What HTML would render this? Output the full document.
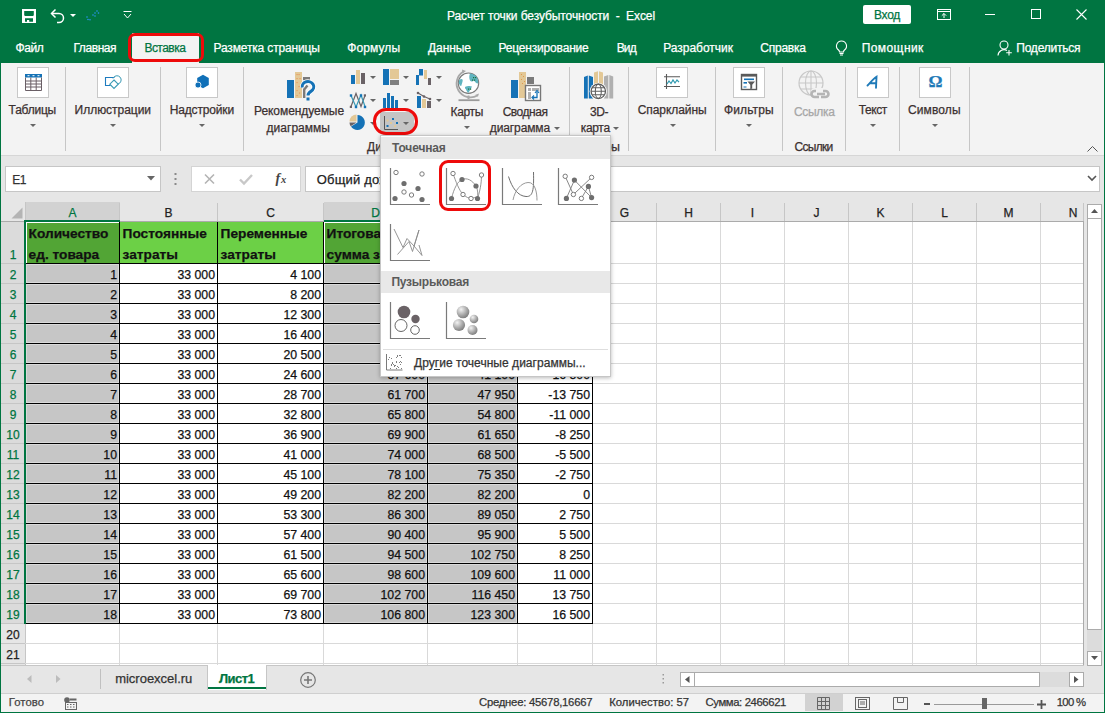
<!DOCTYPE html>
<html><head><meta charset="utf-8"><style>
html,body{margin:0;padding:0;width:1105px;height:713px;overflow:hidden;background:#007541;}
body{position:relative;font-family:"Liberation Sans",sans-serif;}
.t{position:absolute;white-space:pre;line-height:1;-webkit-text-stroke:0.25px currentColor;}
.r{position:absolute;}
svg.r{overflow:visible}
</style></head><body>
<div class="r" style="left:0px;top:0px;width:1105px;height:713px;background:#007541"></div>
<div class="r" style="left:1px;top:63px;width:1103px;height:92px;background:#f3f3f3"></div>
<div class="r" style="left:1px;top:155px;width:1103px;height:1px;background:#d6d6d6"></div>
<div class="r" style="left:1px;top:156px;width:1103px;height:509px;background:#e6e6e6"></div>
<div class="t" style="left:447.00px;top:9.84px;font-size:12px;color:#fff;letter-spacing:-0.085px;">Расчет точки безубыточности  -  Excel</div>
<div class="r" style="left:863px;top:5px;width:48px;height:19px;background:#fff;border-radius:2px"></div>
<div class="t" style="left:874.00px;top:8.84px;font-size:12px;color:#007541;letter-spacing:-0.286px;">Вход</div>
<svg class="r" style="left:937px;top:9px;" width="14" height="11" viewBox="0 0 14 11"><rect x="0.5" y="0.5" width="13" height="10" fill="none" stroke="#fff"/><path d="M0.5 2.5h13" stroke="#fff"/><path d="M7 9V4.5M4.8 6.7L7 4.5l2.2 2.2" fill="none" stroke="#fff"/></svg>
<div class="r" style="left:985px;top:14px;width:10px;height:1px;background:#fff"></div>
<div class="r" style="left:1031px;top:9px;width:10px;height:10px;border:1px solid #fff;box-sizing:border-box"></div>
<svg class="r" style="left:1076px;top:9px;" width="11" height="11" viewBox="0 0 11 11"><path d="M0.5 0.5L10.5 10.5M10.5 0.5L0.5 10.5" stroke="#fff" stroke-width="1.1"/></svg>
<svg class="r" style="left:22px;top:9px;" width="14" height="14" viewBox="0 0 14 14"><rect x="0" y="0" width="14" height="14" fill="#fff"/><path d="M2.2 2h9.6v4.2l-0.8 0.8H3l-0.8-0.8z" fill="#007541"/><path d="M3 9.2h8v3.6H7.2v-1.8H5v1.8H3z" fill="#007541"/></svg>
<svg class="r" style="left:50px;top:8px;" width="16" height="15" viewBox="0 0 16 15"><path d="M2 5.5h7a4.5 4.5 0 0 1 0 9H7" fill="none" stroke="#fff" stroke-width="1.5"/><path d="M5.5 1.5L1.5 5.5l4 4" fill="none" stroke="#fff" stroke-width="1.5"/></svg>
<svg class="r" style="left:70px;top:14px;" width="6" height="3" viewBox="0 0 6 3"><path d="M0 0h6L3 3z" fill="#fff"/></svg>
<svg class="r" style="left:86px;top:10px;" width="15" height="11" viewBox="0 0 15 11"><g fill="#2b95f0"><circle cx="1" cy="7" r=".8"/><circle cx="2" cy="9.5" r=".8"/><circle cx="4" cy="9.8" r=".8"/><circle cx="7" cy="5" r=".8"/><circle cx="9" cy="6" r=".8"/><circle cx="9" cy="3" r=".8"/><circle cx="11" cy="1" r=".8"/><circle cx="12.5" cy="3" r=".8"/></g></svg>
<svg class="r" style="left:123px;top:11px;" width="9" height="8" viewBox="0 0 9 8"><path d="M0.5 0.5h8" stroke="#fff"/><path d="M1 3l3.5 4L8 3" fill="none" stroke="#fff"/></svg>
<div class="t" style="left:15.40px;top:41.84px;font-size:12px;color:#fff;letter-spacing:-0.350px;">Файл</div>
<div class="t" style="left:73.40px;top:41.84px;font-size:12px;color:#fff;letter-spacing:-0.410px;">Главная</div>
<div class="t" style="left:213.50px;top:41.84px;font-size:12px;color:#fff;letter-spacing:-0.151px;">Разметка страницы</div>
<div class="t" style="left:347.20px;top:41.84px;font-size:12px;color:#fff;letter-spacing:0.112px;">Формулы</div>
<div class="t" style="left:428.00px;top:41.84px;font-size:12px;color:#fff;letter-spacing:-0.075px;">Данные</div>
<div class="t" style="left:498.50px;top:41.84px;font-size:12px;color:#fff;letter-spacing:-0.182px;">Рецензирование</div>
<div class="t" style="left:616.70px;top:41.84px;font-size:12px;color:#fff;letter-spacing:-0.836px;">Вид</div>
<div class="t" style="left:663.20px;top:41.84px;font-size:12px;color:#fff;letter-spacing:-0.016px;">Разработчик</div>
<div class="t" style="left:760.30px;top:41.84px;font-size:12px;color:#fff;letter-spacing:-0.253px;">Справка</div>
<div class="r" style="left:132px;top:33px;width:67px;height:30px;background:#f3f3f3"></div>
<div class="t" style="left:144.40px;top:41.84px;font-size:12px;color:#007541;letter-spacing:-0.514px;">Вставка</div>
<div class="r" style="left:128px;top:33px;width:76px;height:29px;border:3px solid #ee0a0a;border-radius:7px;box-sizing:border-box"></div>
<div class="t" style="left:861.70px;top:41.84px;font-size:12px;color:#fff;letter-spacing:0.428px;">Помощник</div>
<svg class="r" style="left:835px;top:40px;" width="13" height="16" viewBox="0 0 13 16"><path d="M6.5 1a5 5 0 0 0-3 9c.6.5 1 1.2 1 2h4c0-.8.4-1.5 1-2a5 5 0 0 0-3-9z" fill="none" stroke="#fff" stroke-width="1.1"/><path d="M4.5 13.5h4M5 15h3" stroke="#fff" stroke-width="1"/></svg>
<svg class="r" style="left:997px;top:40px;" width="16" height="16" viewBox="0 0 16 16"><circle cx="7" cy="5" r="4" fill="none" stroke="#fff" stroke-width="1.1"/><path d="M1 15.5a6 6 0 0 1 9-5" fill="none" stroke="#fff" stroke-width="1.1"/><path d="M12 10v5.5M9.2 12.8h5.6" stroke="#fff" stroke-width="1.1"/></svg>
<div class="t" style="left:1016.30px;top:41.84px;font-size:12px;color:#fff;letter-spacing:-0.236px;">Поделиться</div>
<div class="r" style="left:65px;top:67px;width:1px;height:84px;background:#c6c6c6"></div>
<div class="r" style="left:160px;top:67px;width:1px;height:84px;background:#c6c6c6"></div>
<div class="r" style="left:243px;top:67px;width:1px;height:84px;background:#c6c6c6"></div>
<div class="r" style="left:569px;top:67px;width:1px;height:84px;background:#c6c6c6"></div>
<div class="r" style="left:628px;top:67px;width:1px;height:84px;background:#c6c6c6"></div>
<div class="r" style="left:715px;top:67px;width:1px;height:84px;background:#c6c6c6"></div>
<div class="r" style="left:782px;top:67px;width:1px;height:84px;background:#c6c6c6"></div>
<div class="r" style="left:845px;top:67px;width:1px;height:84px;background:#c6c6c6"></div>
<div class="r" style="left:899px;top:67px;width:1px;height:84px;background:#c6c6c6"></div>
<div class="r" style="left:969px;top:67px;width:1px;height:84px;background:#c6c6c6"></div>
<div class="r" style="left:17px;top:67px;width:32px;height:31px;background:#fff;border:1px solid #c8c8c8;box-sizing:border-box"></div>
<svg class="r" style="left:25px;top:74px;" width="17" height="17" viewBox="0 0 17 17"><rect x="0" y="0" width="17" height="3.5" fill="#1572b6"/><g fill="#fff"><rect x="2.5" y="1.2" width="2" height="1"/><rect x="7.5" y="1.2" width="2" height="1"/><rect x="12.5" y="1.2" width="2" height="1"/></g><path d="M0.5 3.5v13h16v-13M0.5 7h16M0.5 10h16M0.5 13h16M5.8 3.5v13M11.2 3.5v13" fill="none" stroke="#6a5f66" stroke-width="1"/></svg>
<div class="t" style="left:8.60px;top:103.84px;font-size:12px;color:#3b3030;letter-spacing:-0.229px;">Таблицы</div>
<svg class="r" style="left:29.6px;top:123.8px;" width="6" height="4" viewBox="0 0 6 4"><path d="M0 0h6L3 3z" fill="#666"/></svg>
<div class="r" style="left:97px;top:67px;width:32px;height:31px;background:#fff;border:1px solid #c8c8c8;box-sizing:border-box"></div>
<svg class="r" style="left:104px;top:74px;" width="18" height="18" viewBox="0 0 18 18"><path d="M6.5 11.5H1.5V3.5h9" fill="none" stroke="#1e7bbf" stroke-width="1.1"/><path d="M9 4.5a4.2 4.2 0 1 1 5 5.5" fill="none" stroke="#3a9ab5" stroke-width="1"/><path d="M10 6l4.2 4.2L10 14.4 5.8 10.2z" fill="none" stroke="#3a9ab5" stroke-width="1.1"/></svg>
<div class="t" style="left:74.60px;top:103.84px;font-size:12px;color:#3b3030;letter-spacing:-0.032px;">Иллюстрации</div>
<svg class="r" style="left:110px;top:123.8px;" width="6" height="4" viewBox="0 0 6 4"><path d="M0 0h6L3 3z" fill="#666"/></svg>
<div class="r" style="left:186px;top:67px;width:32px;height:31px;background:#fff;border:1px solid #c8c8c8;box-sizing:border-box"></div>
<svg class="r" style="left:194px;top:74px;" width="16" height="16" viewBox="0 0 16 16"><path d="M9 0.8l5.8 3.3v6.8L9 14.2 3.2 10.9V4.1z" fill="#1070b8"/><circle cx="4" cy="11" r="3" fill="#1070b8" stroke="#fff" stroke-width="0.8"/></svg>
<div class="t" style="left:169.70px;top:103.84px;font-size:12px;color:#3b3030;letter-spacing:-0.154px;">Надстройки</div>
<svg class="r" style="left:199px;top:123.8px;" width="6" height="4" viewBox="0 0 6 4"><path d="M0 0h6L3 3z" fill="#666"/></svg>
<svg class="r" style="left:286px;top:71px;" width="30" height="31" viewBox="0 0 30 31"><rect x="1" y="9" width="7" height="18" fill="#1572b6"/><rect x="9" y="1" width="7" height="26" fill="#e3c896"/><g fill="#e8955a"><rect x="10.5" y="3" width="1.1" height="1.1"/><rect x="12.5" y="3" width="1.1" height="1.1"/><rect x="10.5" y="7" width="1.1" height="1.1"/><rect x="13.5" y="7" width="1.1" height="1.1"/><rect x="10.5" y="11" width="1.1" height="1.1"/><rect x="12.5" y="15" width="1.1" height="1.1"/><rect x="10.5" y="19" width="1.1" height="1.1"/><rect x="13" y="21.5" width="1.1" height="1.1"/><rect x="10.5" y="24" width="1.1" height="1.1"/></g><rect x="17" y="6" width="7" height="3.2" fill="#7a7a7a"/><path d="M21.5 14.5L18.2 18.5V27" fill="none" stroke="#7a7a7a" stroke-width="2.4"/><path d="M16.2 16.5a5.8 5.2 0 1 1 9 3.6c-1.6 1-3.2 2-3.2 4.4" fill="none" stroke="#fff" stroke-width="4.6"/><path d="M16.2 16.5a5.8 5.2 0 1 1 9 3.6c-1.6 1-3.2 2-3.2 4.4" fill="none" stroke="#1572b6" stroke-width="3"/><rect x="20.5" y="26.5" width="3" height="3" fill="#1572b6"/></svg>
<div class="t" style="left:254.00px;top:105.34px;font-size:12px;color:#3b3030;letter-spacing:-0.065px;">Рекомендуемые</div>
<div class="t" style="left:266.60px;top:121.54px;font-size:12px;color:#3b3030;letter-spacing:0.019px;">диаграммы</div>
<svg class="r" style="left:350px;top:69px;" width="16" height="16" viewBox="0 0 16 16"><rect x="1" y="6" width="4" height="9" fill="#1572b6"/><rect x="6" y="1" width="4" height="14" fill="#e3c896"/><rect x="11" y="4" width="4" height="11" fill="#6a6266"/></svg>
<svg class="r" style="left:369.5px;top:76.0px;" width="6" height="4" viewBox="0 0 6 4"><path d="M0 0h6L3 3z" fill="#666"/></svg>
<svg class="r" style="left:382px;top:69px;" width="18" height="16" viewBox="0 0 18 16"><rect x="1" y="0" width="6" height="16" fill="#1572b6"/><rect x="8" y="0" width="9" height="10" fill="#e3c896"/><rect x="8" y="11" width="9" height="5" fill="#808080"/></svg>
<svg class="r" style="left:402.5px;top:76.0px;" width="6" height="4" viewBox="0 0 6 4"><path d="M0 0h6L3 3z" fill="#666"/></svg>
<svg class="r" style="left:415px;top:69px;" width="17" height="16" viewBox="0 0 17 16"><rect x="1" y="6" width="3" height="10" fill="#1572b6"/><rect x="4" y="0" width="4" height="6.5" fill="#1572b6"/><rect x="4.5" y="0" width="2.5" height="6" fill="#1572b6"/><rect x="9" y="1" width="3" height="9" fill="#e3c896"/><rect x="13" y="9" width="3" height="7" fill="#6a6266"/></svg>
<svg class="r" style="left:435.5px;top:76.0px;" width="6" height="4" viewBox="0 0 6 4"><path d="M0 0h6L3 3z" fill="#666"/></svg>
<svg class="r" style="left:349px;top:92px;" width="18" height="16" viewBox="0 0 18 16"><path d="M2 14.5L7 1.5l5 13 4-11" fill="none" stroke="#6a6266" stroke-width="1.2"/><path d="M2 3.5l5 11.5 5-12 4 11.5" fill="none" stroke="#3a9ab5" stroke-width="1.2"/><g fill="#1572b6"><rect x="0.8" y="2.3" width="2.4" height="2.4"/><rect x="5.8" y="13.8" width="2.4" height="2.4"/><rect x="10.8" y="2.3" width="2.4" height="2.4"/><rect x="14.8" y="13.8" width="2.4" height="2.4"/></g><g fill="#6a6266"><rect x="0.8" y="13.8" width="2.2" height="2.2"/><rect x="14.8" y="2.3" width="2.2" height="2.2"/></g></svg>
<svg class="r" style="left:369.5px;top:99.0px;" width="6" height="4" viewBox="0 0 6 4"><path d="M0 0h6L3 3z" fill="#666"/></svg>
<svg class="r" style="left:382px;top:92px;" width="17" height="16" viewBox="0 0 17 16"><rect x="1" y="6" width="3" height="10" fill="#1572b6"/><rect x="5" y="1" width="3" height="15" fill="#1572b6"/><rect x="9" y="4" width="3" height="12" fill="#1572b6"/><rect x="13" y="8" width="3" height="8" fill="#1572b6"/></svg>
<svg class="r" style="left:402.5px;top:99.0px;" width="6" height="4" viewBox="0 0 6 4"><path d="M0 0h6L3 3z" fill="#666"/></svg>
<svg class="r" style="left:416px;top:92px;" width="16" height="16" viewBox="0 0 16 16"><rect x="1" y="4" width="4" height="12" fill="#1572b6"/><rect x="6" y="7" width="4" height="9" fill="#e3c896"/><rect x="11" y="9" width="4" height="7" fill="#6a6266"/><path d="M2 1l6 3.5 6 2.5" fill="none" stroke="#6a6266" stroke-width="1.1"/><circle cx="2" cy="1" r="1.3" fill="#6a6266"/><circle cx="8" cy="4.5" r="1.3" fill="#6a6266"/><circle cx="14" cy="7" r="1.3" fill="#6a6266"/></svg>
<svg class="r" style="left:435.5px;top:99.0px;" width="6" height="4" viewBox="0 0 6 4"><path d="M0 0h6L3 3z" fill="#666"/></svg>
<svg class="r" style="left:349px;top:114px;" width="17" height="17" viewBox="0 0 17 17"><path d="M8.5 8.5V1A7.5 7.5 0 1 1 2 12.5z" fill="#1572b6"/><path d="M7.5 7.5V0.5A7 7 0 0 0 0.5 7.5z" fill="#e3c896"/><path d="M7.5 8.5H0.5a7 7 0 0 0 1.2 3.8z" fill="#6a6266"/></svg>
<svg class="r" style="left:370px;top:121.5px;" width="6" height="4" viewBox="0 0 6 4"><path d="M0 0h6L3 3z" fill="#666"/></svg>
<div class="r" style="left:380px;top:112px;width:34px;height:20px;background:#c5c5c5;border-radius:2px"></div>
<svg class="r" style="left:384px;top:116px;" width="15" height="14" viewBox="0 0 15 14"><path d="M0.5 0v13.5H14" fill="none" stroke="#555" stroke-width="1"/><g><rect x="8" y="2" width="2" height="2" fill="#1572b6"/><rect x="2.5" y="3.5" width="2" height="2" fill="#e3c896"/><rect x="6" y="6" width="2" height="2" fill="#e3c896"/><rect x="12" y="6" width="2" height="2" fill="#1572b6"/><rect x="2.5" y="9" width="2" height="2" fill="#1572b6"/><rect x="10" y="9" width="2" height="2" fill="#e3c896"/></g></svg>
<svg class="r" style="left:402.5px;top:121.5px;" width="6" height="4" viewBox="0 0 6 4"><path d="M0 0h6L3 3z" fill="#666"/></svg>
<div class="r" style="left:373px;top:108px;width:45px;height:27px;border:3.5px solid #ee0a0a;border-radius:13px;box-sizing:border-box"></div>
<svg class="r" style="left:454px;top:68px;" width="30" height="34" viewBox="0 0 30 34"><path d="M9.5 3.5A13 13 0 0 0 23.5 27.5" fill="none" stroke="#a8a8a8" stroke-width="1.8"/><path d="M8 1.5l4 1.5-3.5 2.5z" fill="#a8a8a8"/><path d="M21 27l4-1.5-1 3z" fill="#a8a8a8"/><circle cx="14.5" cy="15.2" r="10.2" fill="#fff" stroke="#7a7a7a" stroke-width="1.1"/><path d="M16 5.5c2 0 5 1 7 4 1 2 1.5 4 1 6-2 0-3-2-4-3-1 1-3 1.5-4 0-1-2-1-5 0-7z" fill="#5fb4bf"/><path d="M5.2 12c1.5-1 3-1.5 3.5 0 0 2-1 4-1.5 6-1 0-2-1.5-2.5-3z" fill="#5fb4bf"/><path d="M11 19c2-1 5-1.5 7-.5-1 2-2 4-3.5 6.2-1 0-2-2-2.5-3.5-1 0-1-1.5-1-2.2z" fill="#5fb4bf"/><g fill="#1a6e3a"><rect x="19" y="9" width="1.2" height="1.2"/><rect x="21" y="9" width="1.2" height="1.2"/><rect x="18" y="11.5" width="1.2" height="1.2"/><rect x="20" y="11.5" width="1.2" height="1.2"/><rect x="14" y="20.5" width="1.2" height="1.2"/><rect x="16" y="20.5" width="1.2" height="1.2"/></g><path d="M14.5 27.5v3.5" stroke="#a8a8a8" stroke-width="2"/><path d="M4.5 32.2h21" stroke="#9a9a9a" stroke-width="1.8"/></svg>
<div class="t" style="left:450.50px;top:105.84px;font-size:12px;color:#3b3030;letter-spacing:-0.339px;">Карты</div>
<svg class="r" style="left:463.6px;top:126.0px;" width="6" height="4" viewBox="0 0 6 4"><path d="M0 0h6L3 3z" fill="#666"/></svg>
<svg class="r" style="left:510px;top:71px;" width="32" height="31" viewBox="0 0 32 31"><rect x="1" y="9" width="7" height="18" fill="#1572b6"/><rect x="9" y="1" width="7" height="26" fill="#e3c896"/><g fill="#e09a50"><rect x="11" y="3" width="1" height="1"/><rect x="13" y="5" width="1" height="1"/><rect x="11" y="8" width="1" height="1"/><rect x="14" y="10" width="1" height="1"/><rect x="12" y="12" width="1" height="1"/></g><rect x="17" y="6" width="7" height="7" fill="#7a7a7a"/><rect x="15.5" y="14.5" width="15" height="15" fill="#fff" stroke="#777" stroke-width="1.4"/><rect x="18" y="17" width="3" height="3" fill="#b0b0b0"/><rect x="22" y="17" width="7" height="3" fill="#b0b0b0"/><rect x="18" y="21" width="3" height="7" fill="#b0b0b0"/><path d="M22.5 26.5h4.5v-5.5" fill="none" stroke="#1572b6" stroke-width="1.3"/><path d="M25 22l2-2.5 2 2.5M24 24.5l-2 2 2 2" fill="none" stroke="#1572b6" stroke-width="1.2"/></svg>
<div class="t" style="left:502.70px;top:105.84px;font-size:12px;color:#3b3030;letter-spacing:-0.488px;">Сводная</div>
<div class="t" style="left:489.80px;top:121.84px;font-size:12px;color:#3b3030;letter-spacing:-0.119px;">диаграмма</div>
<svg class="r" style="left:553.5px;top:126.5px;" width="6" height="4" viewBox="0 0 6 4"><path d="M0 0h6L3 3z" fill="#666"/></svg>
<svg class="r" style="left:583px;top:70px;" width="32" height="30" viewBox="0 0 32 30"><path d="M1 7L4.8 5.5V28.5H1z" fill="#1572b6"/><path d="M5.8 5.5L10 7V28.5H5.8z" fill="#1572b6"/><path d="M11 2.5L15 1.2V16H11z" fill="#e3c896"/><path d="M16 1.2L20 2.5V16H16z" fill="#e3c896"/><path d="M21 6.5L25.3 5V28.5H21z" fill="#b0b0b0"/><path d="M26.3 5L30.2 6.5V28.5H26.3z" fill="#b0b0b0"/><circle cx="15.3" cy="21.3" r="8.6" fill="#fff"/><circle cx="15.3" cy="21.3" r="7.2" fill="#fff" stroke="#5f5f5f" stroke-width="1.3"/><ellipse cx="15.3" cy="21.3" rx="3" ry="7.2" fill="none" stroke="#5f5f5f" stroke-width="1.1"/><path d="M8.1 21.3h14.4M9.2 17.8h12.2M9.2 24.8h12.2" stroke="#5f5f5f" stroke-width="1.1"/></svg>
<div class="t" style="left:590.00px;top:105.84px;font-size:12px;color:#3b3030;letter-spacing:-0.445px;">3D-</div>
<div class="t" style="left:580.70px;top:121.84px;font-size:12px;color:#3b3030;letter-spacing:-0.306px;">карта</div>
<svg class="r" style="left:613px;top:126.5px;" width="6" height="4" viewBox="0 0 6 4"><path d="M0 0h6L3 3z" fill="#666"/></svg>
<div class="t" style="left:592.18px;top:140.64px;font-size:12px;color:#3b3030;">Туры</div>
<div class="r" style="left:656px;top:67px;width:32px;height:31px;background:#fff;border:1px solid #c8c8c8;box-sizing:border-box"></div>
<svg class="r" style="left:663px;top:73px;" width="19" height="17" viewBox="0 0 19 17"><path d="M3.5 1v15M1 3.8h16M1 13.5h16" stroke="#5a5a5a" stroke-width="1.1"/><path d="M4 11l2-3 2 2.5 2-3.5 2 3 2-3 2 2.2" fill="none" stroke="#2e9ab0" stroke-width="1.2"/></svg>
<div class="t" style="left:637.70px;top:103.84px;font-size:12px;color:#3b3030;letter-spacing:-0.073px;">Спарклайны</div>
<svg class="r" style="left:669.5px;top:123.8px;" width="6" height="4" viewBox="0 0 6 4"><path d="M0 0h6L3 3z" fill="#666"/></svg>
<div class="r" style="left:733px;top:67px;width:32px;height:31px;background:#fff;border:1px solid #c8c8c8;box-sizing:border-box"></div>
<svg class="r" style="left:740px;top:73px;" width="18" height="18" viewBox="0 0 18 18"><rect x="1.5" y="1.5" width="15" height="15" fill="#fff" stroke="#5a5a5a" stroke-width="1.4"/><rect x="1" y="1" width="16" height="2.6" fill="#5a5a5a"/><rect x="4" y="5.5" width="10" height="1.6" fill="#1572b6"/><rect x="3.5" y="9" width="3.5" height="1.6" fill="#1572b6"/><path d="M7.5 8.5h7.5l-2.8 3.2v3.8l-1.9 0.8v-4.6z" fill="#5a5a5a"/><path d="M3.5 14h3" stroke="#1572b6" stroke-width="1"/></svg>
<div class="t" style="left:724.00px;top:103.84px;font-size:12px;color:#3b3030;letter-spacing:0.109px;">Фильтры</div>
<svg class="r" style="left:746px;top:123.8px;" width="6" height="4" viewBox="0 0 6 4"><path d="M0 0h6L3 3z" fill="#666"/></svg>
<svg class="r" style="left:798px;top:70px;" width="33" height="31" viewBox="0 0 33 31"><circle cx="13" cy="13" r="12" fill="none" stroke="#c8c8c8" stroke-width="1.2"/><ellipse cx="13" cy="13" rx="5.5" ry="12" fill="none" stroke="#c8c8c8" stroke-width="1.1"/><path d="M1 13h24M3 7h20M3 19h20M13 1v24" stroke="#c8c8c8" stroke-width="1.1"/><rect x="13" y="18" width="19" height="12" rx="4" fill="#f3f3f3"/><path d="M18 21h-1.5a3 3 0 0 0 0 6H21M25 21h2.5a3 3 0 0 1 0 6H23M19 24h8" fill="none" stroke="#b5b5b5" stroke-width="2.6"/></svg>
<div class="t" style="left:794.00px;top:105.64px;font-size:12px;color:#a6a6a6;letter-spacing:-0.313px;">Ссылка</div>
<div class="t" style="left:794.60px;top:140.84px;font-size:12px;color:#3b3030;letter-spacing:-0.724px;">Ссылки</div>
<div class="r" style="left:857px;top:67px;width:32px;height:31px;background:#fff;border:1px solid #c8c8c8;box-sizing:border-box"></div>
<svg class="r" style="left:866px;top:75px;" width="13" height="14" viewBox="0 0 13 14"><path d="M1.5 10.5C4 8 7 4 10.5 1.8L10 12.8M4.5 8.2h5.5" fill="none" stroke="#1f7ab8" stroke-width="1.9" stroke-linecap="round"/></svg>
<div class="t" style="left:858.70px;top:103.84px;font-size:12px;color:#3b3030;letter-spacing:-0.422px;">Текст</div>
<svg class="r" style="left:870px;top:123.8px;" width="6" height="4" viewBox="0 0 6 4"><path d="M0 0h6L3 3z" fill="#666"/></svg>
<div class="r" style="left:919px;top:67px;width:32px;height:31px;background:#fff;border:1px solid #c8c8c8;box-sizing:border-box"></div>
<div class="t" style="left:928.47px;top:73.18px;font-size:17.5px;color:#1f7ab8;font-weight:bold;font-family:'Liberation Serif',serif;">Ω</div>
<div class="t" style="left:908.00px;top:103.84px;font-size:12px;color:#3b3030;letter-spacing:0.101px;">Символы</div>
<svg class="r" style="left:932px;top:123.8px;" width="6" height="4" viewBox="0 0 6 4"><path d="M0 0h6L3 3z" fill="#666"/></svg>
<svg class="r" style="left:1087px;top:146px;" width="11" height="6" viewBox="0 0 11 6"><path d="M0.5 5.5L5.5 0.5l5 5" fill="none" stroke="#555" stroke-width="1"/></svg>
<div class="t" style="left:367.00px;top:140.94px;font-size:12px;color:#3b3030;">Диаграммы</div>
<div class="r" style="left:5px;top:166px;width:156px;height:26px;background:#fff;border:1px solid #c6c6c6;box-sizing:border-box"></div>
<div class="t" style="left:12.30px;top:173.84px;font-size:12px;color:#333;letter-spacing:-0.589px;">E1</div>
<svg class="r" style="left:147px;top:176px;" width="8" height="5" viewBox="0 0 8 5"><path d="M0 0h8L4 4.5z" fill="#666"/></svg>
<svg class="r" style="left:174px;top:172px;" width="3" height="14" viewBox="0 0 3 14"><g fill="#8a8a8a"><rect x="0.5" y="1" width="2" height="2"/><rect x="0.5" y="6" width="2" height="2"/><rect x="0.5" y="11" width="2" height="2"/></g></svg>
<div class="r" style="left:191px;top:166px;width:110px;height:26px;background:#fff;border:1px solid #d4d4d4;box-sizing:border-box"></div>
<svg class="r" style="left:204px;top:174px;" width="11" height="10" viewBox="0 0 11 10"><path d="M1 0.5l9 9M10 0.5l-9 9" stroke="#b4b4b4" stroke-width="1.6"/></svg>
<svg class="r" style="left:239px;top:174px;" width="14" height="11" viewBox="0 0 14 11"><path d="M1 5.5l4 4L13 1" fill="none" stroke="#c8c8c8" stroke-width="2.4"/></svg>
<svg class="r" style="left:275px;top:171px;" width="14" height="15" viewBox="0 0 14 15"><text x="0.5" y="11.5" font-family="Liberation Serif" font-style="italic" font-weight="bold" font-size="14" fill="#444">f</text><text x="6" y="11.5" font-family="Liberation Serif" font-style="italic" font-weight="bold" font-size="10.5" fill="#444">x</text></svg>
<div class="r" style="left:305px;top:166px;width:795px;height:26px;background:#fff;border:1px solid #c6c6c6;box-sizing:border-box"></div>
<div class="t" style="left:316.70px;top:172.99px;font-size:13px;color:#222;letter-spacing:0.2px;">Общий доход</div>
<svg class="r" style="left:1087px;top:175px;" width="10" height="6" viewBox="0 0 10 6"><path d="M1 1l4 4 4-4" fill="none" stroke="#555" stroke-width="1.6"/></svg>
<div class="r" style="left:25px;top:222px;width:1059px;height:443px;background:#fff"></div>
<div class="r" style="left:1px;top:202px;width:1083px;height:20px;background:#e6e6e6"></div>
<div class="r" style="left:1px;top:221px;width:1083px;height:1px;background:#ababab"></div>
<div class="r" style="left:26px;top:202px;width:94px;height:19px;background:#d2d2d2"></div>
<div class="r" style="left:26px;top:220px;width:94px;height:2px;background:#007541"></div>
<div class="r" style="left:119px;top:203px;width:1px;height:18px;background:#c6c6c6"></div>
<div class="t" style="left:68.50px;top:206.64px;font-size:12px;color:#007541;">A</div>
<div class="r" style="left:217px;top:203px;width:1px;height:18px;background:#c6c6c6"></div>
<div class="t" style="left:164.50px;top:206.64px;font-size:12px;color:#222;">B</div>
<div class="r" style="left:323px;top:203px;width:1px;height:18px;background:#c6c6c6"></div>
<div class="t" style="left:266.17px;top:206.64px;font-size:12px;color:#222;">C</div>
<div class="r" style="left:324px;top:202px;width:104px;height:19px;background:#d2d2d2"></div>
<div class="r" style="left:324px;top:220px;width:104px;height:2px;background:#007541"></div>
<div class="r" style="left:427px;top:203px;width:1px;height:18px;background:#c6c6c6"></div>
<div class="t" style="left:371.17px;top:206.64px;font-size:12px;color:#007541;">D</div>
<div class="r" style="left:428px;top:202px;width:90px;height:19px;background:#d2d2d2"></div>
<div class="r" style="left:428px;top:220px;width:90px;height:2px;background:#007541"></div>
<div class="r" style="left:517px;top:203px;width:1px;height:18px;background:#c6c6c6"></div>
<div class="t" style="left:468.50px;top:206.64px;font-size:12px;color:#007541;">E</div>
<div class="r" style="left:592px;top:203px;width:1px;height:18px;background:#c6c6c6"></div>
<div class="t" style="left:551.34px;top:206.64px;font-size:12px;color:#222;">F</div>
<div class="r" style="left:656px;top:203px;width:1px;height:18px;background:#c6c6c6"></div>
<div class="t" style="left:619.83px;top:206.64px;font-size:12px;color:#222;">G</div>
<div class="r" style="left:720px;top:203px;width:1px;height:18px;background:#c6c6c6"></div>
<div class="t" style="left:684.17px;top:206.64px;font-size:12px;color:#222;">H</div>
<div class="r" style="left:784px;top:203px;width:1px;height:18px;background:#c6c6c6"></div>
<div class="t" style="left:750.83px;top:206.64px;font-size:12px;color:#222;">I</div>
<div class="r" style="left:848px;top:203px;width:1px;height:18px;background:#c6c6c6"></div>
<div class="t" style="left:813.50px;top:206.64px;font-size:12px;color:#222;">J</div>
<div class="r" style="left:912px;top:203px;width:1px;height:18px;background:#c6c6c6"></div>
<div class="t" style="left:876.50px;top:206.64px;font-size:12px;color:#222;">K</div>
<div class="r" style="left:976px;top:203px;width:1px;height:18px;background:#c6c6c6"></div>
<div class="t" style="left:941.16px;top:206.64px;font-size:12px;color:#222;">L</div>
<div class="r" style="left:1040px;top:203px;width:1px;height:18px;background:#c6c6c6"></div>
<div class="t" style="left:1003.50px;top:206.64px;font-size:12px;color:#222;">M</div>
<div class="r" style="left:1083px;top:203px;width:1px;height:18px;background:#c6c6c6"></div>
<div class="t" style="left:1068.67px;top:206.64px;font-size:12px;color:#222;">N</div>
<svg class="r" style="left:11px;top:207px;" width="12" height="12" viewBox="0 0 12 12"><path d="M11.5 0.5v11H0.5z" fill="#b4b4b4"/></svg>
<div class="r" style="left:25px;top:202px;width:1px;height:463px;background:#c6c6c6"></div>
<div class="r" style="left:1px;top:222px;width:24px;height:42px;background:#dbdbdb"></div>
<div class="r" style="left:1px;top:263px;width:24px;height:1px;background:#c6c6c6"></div>
<div class="t" style="left:9.66px;top:248.84px;font-size:12px;color:#007541;">1</div>
<div class="r" style="left:1px;top:264px;width:24px;height:20px;background:#dbdbdb"></div>
<div class="r" style="left:1px;top:283px;width:24px;height:1px;background:#c6c6c6"></div>
<div class="t" style="left:9.66px;top:268.84px;font-size:12px;color:#007541;">2</div>
<div class="r" style="left:1px;top:284px;width:24px;height:20px;background:#dbdbdb"></div>
<div class="r" style="left:1px;top:303px;width:24px;height:1px;background:#c6c6c6"></div>
<div class="t" style="left:9.66px;top:288.84px;font-size:12px;color:#007541;">3</div>
<div class="r" style="left:1px;top:304px;width:24px;height:20px;background:#dbdbdb"></div>
<div class="r" style="left:1px;top:323px;width:24px;height:1px;background:#c6c6c6"></div>
<div class="t" style="left:9.66px;top:308.84px;font-size:12px;color:#007541;">4</div>
<div class="r" style="left:1px;top:324px;width:24px;height:20px;background:#dbdbdb"></div>
<div class="r" style="left:1px;top:343px;width:24px;height:1px;background:#c6c6c6"></div>
<div class="t" style="left:9.66px;top:328.84px;font-size:12px;color:#007541;">5</div>
<div class="r" style="left:1px;top:344px;width:24px;height:20px;background:#dbdbdb"></div>
<div class="r" style="left:1px;top:363px;width:24px;height:1px;background:#c6c6c6"></div>
<div class="t" style="left:9.66px;top:348.84px;font-size:12px;color:#007541;">6</div>
<div class="r" style="left:1px;top:364px;width:24px;height:20px;background:#dbdbdb"></div>
<div class="r" style="left:1px;top:383px;width:24px;height:1px;background:#c6c6c6"></div>
<div class="t" style="left:9.66px;top:368.84px;font-size:12px;color:#007541;">7</div>
<div class="r" style="left:1px;top:384px;width:24px;height:20px;background:#dbdbdb"></div>
<div class="r" style="left:1px;top:403px;width:24px;height:1px;background:#c6c6c6"></div>
<div class="t" style="left:9.66px;top:388.84px;font-size:12px;color:#007541;">8</div>
<div class="r" style="left:1px;top:404px;width:24px;height:20px;background:#dbdbdb"></div>
<div class="r" style="left:1px;top:423px;width:24px;height:1px;background:#c6c6c6"></div>
<div class="t" style="left:9.66px;top:408.84px;font-size:12px;color:#007541;">9</div>
<div class="r" style="left:1px;top:424px;width:24px;height:20px;background:#dbdbdb"></div>
<div class="r" style="left:1px;top:443px;width:24px;height:1px;background:#c6c6c6"></div>
<div class="t" style="left:6.33px;top:428.84px;font-size:12px;color:#007541;">10</div>
<div class="r" style="left:1px;top:444px;width:24px;height:20px;background:#dbdbdb"></div>
<div class="r" style="left:1px;top:463px;width:24px;height:1px;background:#c6c6c6"></div>
<div class="t" style="left:6.77px;top:448.84px;font-size:12px;color:#007541;">11</div>
<div class="r" style="left:1px;top:464px;width:24px;height:20px;background:#dbdbdb"></div>
<div class="r" style="left:1px;top:483px;width:24px;height:1px;background:#c6c6c6"></div>
<div class="t" style="left:6.33px;top:468.84px;font-size:12px;color:#007541;">12</div>
<div class="r" style="left:1px;top:484px;width:24px;height:20px;background:#dbdbdb"></div>
<div class="r" style="left:1px;top:503px;width:24px;height:1px;background:#c6c6c6"></div>
<div class="t" style="left:6.33px;top:488.84px;font-size:12px;color:#007541;">13</div>
<div class="r" style="left:1px;top:504px;width:24px;height:20px;background:#dbdbdb"></div>
<div class="r" style="left:1px;top:523px;width:24px;height:1px;background:#c6c6c6"></div>
<div class="t" style="left:6.33px;top:508.84px;font-size:12px;color:#007541;">14</div>
<div class="r" style="left:1px;top:524px;width:24px;height:20px;background:#dbdbdb"></div>
<div class="r" style="left:1px;top:543px;width:24px;height:1px;background:#c6c6c6"></div>
<div class="t" style="left:6.33px;top:528.84px;font-size:12px;color:#007541;">15</div>
<div class="r" style="left:1px;top:544px;width:24px;height:20px;background:#dbdbdb"></div>
<div class="r" style="left:1px;top:563px;width:24px;height:1px;background:#c6c6c6"></div>
<div class="t" style="left:6.33px;top:548.84px;font-size:12px;color:#007541;">16</div>
<div class="r" style="left:1px;top:564px;width:24px;height:20px;background:#dbdbdb"></div>
<div class="r" style="left:1px;top:583px;width:24px;height:1px;background:#c6c6c6"></div>
<div class="t" style="left:6.33px;top:568.84px;font-size:12px;color:#007541;">17</div>
<div class="r" style="left:1px;top:584px;width:24px;height:20px;background:#dbdbdb"></div>
<div class="r" style="left:1px;top:603px;width:24px;height:1px;background:#c6c6c6"></div>
<div class="t" style="left:6.33px;top:588.84px;font-size:12px;color:#007541;">18</div>
<div class="r" style="left:1px;top:604px;width:24px;height:20px;background:#dbdbdb"></div>
<div class="r" style="left:1px;top:623px;width:24px;height:1px;background:#c6c6c6"></div>
<div class="t" style="left:6.33px;top:608.84px;font-size:12px;color:#007541;">19</div>
<div class="r" style="left:1px;top:624px;width:24px;height:20px;background:#e6e6e6"></div>
<div class="r" style="left:1px;top:643px;width:24px;height:1px;background:#c6c6c6"></div>
<div class="t" style="left:6.33px;top:628.84px;font-size:12px;color:#222;">20</div>
<div class="r" style="left:1px;top:644px;width:24px;height:20px;background:#e6e6e6"></div>
<div class="r" style="left:1px;top:663px;width:24px;height:1px;background:#c6c6c6"></div>
<div class="t" style="left:6.33px;top:648.84px;font-size:12px;color:#222;">21</div>
<div class="r" style="left:119px;top:222px;width:1px;height:443px;background:#d9d9d9"></div>
<div class="r" style="left:217px;top:222px;width:1px;height:443px;background:#d9d9d9"></div>
<div class="r" style="left:323px;top:222px;width:1px;height:443px;background:#d9d9d9"></div>
<div class="r" style="left:427px;top:222px;width:1px;height:443px;background:#d9d9d9"></div>
<div class="r" style="left:517px;top:222px;width:1px;height:443px;background:#d9d9d9"></div>
<div class="r" style="left:592px;top:222px;width:1px;height:443px;background:#d9d9d9"></div>
<div class="r" style="left:656px;top:222px;width:1px;height:443px;background:#d9d9d9"></div>
<div class="r" style="left:720px;top:222px;width:1px;height:443px;background:#d9d9d9"></div>
<div class="r" style="left:784px;top:222px;width:1px;height:443px;background:#d9d9d9"></div>
<div class="r" style="left:848px;top:222px;width:1px;height:443px;background:#d9d9d9"></div>
<div class="r" style="left:912px;top:222px;width:1px;height:443px;background:#d9d9d9"></div>
<div class="r" style="left:976px;top:222px;width:1px;height:443px;background:#d9d9d9"></div>
<div class="r" style="left:1040px;top:222px;width:1px;height:443px;background:#d9d9d9"></div>
<div class="r" style="left:1083px;top:222px;width:1px;height:443px;background:#d9d9d9"></div>
<div class="r" style="left:25px;top:263px;width:1059px;height:1px;background:#d9d9d9"></div>
<div class="r" style="left:25px;top:283px;width:1059px;height:1px;background:#d9d9d9"></div>
<div class="r" style="left:25px;top:303px;width:1059px;height:1px;background:#d9d9d9"></div>
<div class="r" style="left:25px;top:323px;width:1059px;height:1px;background:#d9d9d9"></div>
<div class="r" style="left:25px;top:343px;width:1059px;height:1px;background:#d9d9d9"></div>
<div class="r" style="left:25px;top:363px;width:1059px;height:1px;background:#d9d9d9"></div>
<div class="r" style="left:25px;top:383px;width:1059px;height:1px;background:#d9d9d9"></div>
<div class="r" style="left:25px;top:403px;width:1059px;height:1px;background:#d9d9d9"></div>
<div class="r" style="left:25px;top:423px;width:1059px;height:1px;background:#d9d9d9"></div>
<div class="r" style="left:25px;top:443px;width:1059px;height:1px;background:#d9d9d9"></div>
<div class="r" style="left:25px;top:463px;width:1059px;height:1px;background:#d9d9d9"></div>
<div class="r" style="left:25px;top:483px;width:1059px;height:1px;background:#d9d9d9"></div>
<div class="r" style="left:25px;top:503px;width:1059px;height:1px;background:#d9d9d9"></div>
<div class="r" style="left:25px;top:523px;width:1059px;height:1px;background:#d9d9d9"></div>
<div class="r" style="left:25px;top:543px;width:1059px;height:1px;background:#d9d9d9"></div>
<div class="r" style="left:25px;top:563px;width:1059px;height:1px;background:#d9d9d9"></div>
<div class="r" style="left:25px;top:583px;width:1059px;height:1px;background:#d9d9d9"></div>
<div class="r" style="left:25px;top:603px;width:1059px;height:1px;background:#d9d9d9"></div>
<div class="r" style="left:25px;top:623px;width:1059px;height:1px;background:#d9d9d9"></div>
<div class="r" style="left:25px;top:643px;width:1059px;height:1px;background:#d9d9d9"></div>
<div class="r" style="left:25px;top:663px;width:1059px;height:1px;background:#d9d9d9"></div>
<div class="r" style="left:1083px;top:221px;width:1px;height:444px;background:#ababab"></div>
<div class="r" style="left:26px;top:222px;width:94px;height:41px;background:#52a535"></div>
<div class="r" style="left:26px;top:222px;width:94px;height:41px;border:1px solid #fff;border-bottom:0;box-sizing:border-box"></div>
<div class="r" style="left:26px;top:264px;width:94px;height:359px;background:#fff"></div>
<div class="r" style="left:26px;top:264px;width:93px;height:19px;background:#dadada"></div>
<div class="r" style="left:27px;top:265px;width:91px;height:17px;background:#c6c6c6"></div>
<div class="r" style="left:26px;top:284px;width:93px;height:19px;background:#dadada"></div>
<div class="r" style="left:27px;top:285px;width:91px;height:17px;background:#c6c6c6"></div>
<div class="r" style="left:26px;top:304px;width:93px;height:19px;background:#dadada"></div>
<div class="r" style="left:27px;top:305px;width:91px;height:17px;background:#c6c6c6"></div>
<div class="r" style="left:26px;top:324px;width:93px;height:19px;background:#dadada"></div>
<div class="r" style="left:27px;top:325px;width:91px;height:17px;background:#c6c6c6"></div>
<div class="r" style="left:26px;top:344px;width:93px;height:19px;background:#dadada"></div>
<div class="r" style="left:27px;top:345px;width:91px;height:17px;background:#c6c6c6"></div>
<div class="r" style="left:26px;top:364px;width:93px;height:19px;background:#dadada"></div>
<div class="r" style="left:27px;top:365px;width:91px;height:17px;background:#c6c6c6"></div>
<div class="r" style="left:26px;top:384px;width:93px;height:19px;background:#dadada"></div>
<div class="r" style="left:27px;top:385px;width:91px;height:17px;background:#c6c6c6"></div>
<div class="r" style="left:26px;top:404px;width:93px;height:19px;background:#dadada"></div>
<div class="r" style="left:27px;top:405px;width:91px;height:17px;background:#c6c6c6"></div>
<div class="r" style="left:26px;top:424px;width:93px;height:19px;background:#dadada"></div>
<div class="r" style="left:27px;top:425px;width:91px;height:17px;background:#c6c6c6"></div>
<div class="r" style="left:26px;top:444px;width:93px;height:19px;background:#dadada"></div>
<div class="r" style="left:27px;top:445px;width:91px;height:17px;background:#c6c6c6"></div>
<div class="r" style="left:26px;top:464px;width:93px;height:19px;background:#dadada"></div>
<div class="r" style="left:27px;top:465px;width:91px;height:17px;background:#c6c6c6"></div>
<div class="r" style="left:26px;top:484px;width:93px;height:19px;background:#dadada"></div>
<div class="r" style="left:27px;top:485px;width:91px;height:17px;background:#c6c6c6"></div>
<div class="r" style="left:26px;top:504px;width:93px;height:19px;background:#dadada"></div>
<div class="r" style="left:27px;top:505px;width:91px;height:17px;background:#c6c6c6"></div>
<div class="r" style="left:26px;top:524px;width:93px;height:19px;background:#dadada"></div>
<div class="r" style="left:27px;top:525px;width:91px;height:17px;background:#c6c6c6"></div>
<div class="r" style="left:26px;top:544px;width:93px;height:19px;background:#dadada"></div>
<div class="r" style="left:27px;top:545px;width:91px;height:17px;background:#c6c6c6"></div>
<div class="r" style="left:26px;top:564px;width:93px;height:19px;background:#dadada"></div>
<div class="r" style="left:27px;top:565px;width:91px;height:17px;background:#c6c6c6"></div>
<div class="r" style="left:26px;top:584px;width:93px;height:19px;background:#dadada"></div>
<div class="r" style="left:27px;top:585px;width:91px;height:17px;background:#c6c6c6"></div>
<div class="r" style="left:26px;top:604px;width:93px;height:19px;background:#dadada"></div>
<div class="r" style="left:27px;top:605px;width:91px;height:17px;background:#c6c6c6"></div>
<div class="r" style="left:120px;top:222px;width:98px;height:41px;background:#6cd046"></div>
<div class="r" style="left:218px;top:222px;width:106px;height:41px;background:#6cd046"></div>
<div class="r" style="left:324px;top:222px;width:104px;height:41px;background:#52a535"></div>
<div class="r" style="left:324px;top:222px;width:104px;height:41px;border:1px solid #fff;border-bottom:0;box-sizing:border-box"></div>
<div class="r" style="left:324px;top:264px;width:104px;height:359px;background:#fff"></div>
<div class="r" style="left:324px;top:264px;width:103px;height:19px;background:#dadada"></div>
<div class="r" style="left:325px;top:265px;width:101px;height:17px;background:#c6c6c6"></div>
<div class="r" style="left:324px;top:284px;width:103px;height:19px;background:#dadada"></div>
<div class="r" style="left:325px;top:285px;width:101px;height:17px;background:#c6c6c6"></div>
<div class="r" style="left:324px;top:304px;width:103px;height:19px;background:#dadada"></div>
<div class="r" style="left:325px;top:305px;width:101px;height:17px;background:#c6c6c6"></div>
<div class="r" style="left:324px;top:324px;width:103px;height:19px;background:#dadada"></div>
<div class="r" style="left:325px;top:325px;width:101px;height:17px;background:#c6c6c6"></div>
<div class="r" style="left:324px;top:344px;width:103px;height:19px;background:#dadada"></div>
<div class="r" style="left:325px;top:345px;width:101px;height:17px;background:#c6c6c6"></div>
<div class="r" style="left:324px;top:364px;width:103px;height:19px;background:#dadada"></div>
<div class="r" style="left:325px;top:365px;width:101px;height:17px;background:#c6c6c6"></div>
<div class="r" style="left:324px;top:384px;width:103px;height:19px;background:#dadada"></div>
<div class="r" style="left:325px;top:385px;width:101px;height:17px;background:#c6c6c6"></div>
<div class="r" style="left:324px;top:404px;width:103px;height:19px;background:#dadada"></div>
<div class="r" style="left:325px;top:405px;width:101px;height:17px;background:#c6c6c6"></div>
<div class="r" style="left:324px;top:424px;width:103px;height:19px;background:#dadada"></div>
<div class="r" style="left:325px;top:425px;width:101px;height:17px;background:#c6c6c6"></div>
<div class="r" style="left:324px;top:444px;width:103px;height:19px;background:#dadada"></div>
<div class="r" style="left:325px;top:445px;width:101px;height:17px;background:#c6c6c6"></div>
<div class="r" style="left:324px;top:464px;width:103px;height:19px;background:#dadada"></div>
<div class="r" style="left:325px;top:465px;width:101px;height:17px;background:#c6c6c6"></div>
<div class="r" style="left:324px;top:484px;width:103px;height:19px;background:#dadada"></div>
<div class="r" style="left:325px;top:485px;width:101px;height:17px;background:#c6c6c6"></div>
<div class="r" style="left:324px;top:504px;width:103px;height:19px;background:#dadada"></div>
<div class="r" style="left:325px;top:505px;width:101px;height:17px;background:#c6c6c6"></div>
<div class="r" style="left:324px;top:524px;width:103px;height:19px;background:#dadada"></div>
<div class="r" style="left:325px;top:525px;width:101px;height:17px;background:#c6c6c6"></div>
<div class="r" style="left:324px;top:544px;width:103px;height:19px;background:#dadada"></div>
<div class="r" style="left:325px;top:545px;width:101px;height:17px;background:#c6c6c6"></div>
<div class="r" style="left:324px;top:564px;width:103px;height:19px;background:#dadada"></div>
<div class="r" style="left:325px;top:565px;width:101px;height:17px;background:#c6c6c6"></div>
<div class="r" style="left:324px;top:584px;width:103px;height:19px;background:#dadada"></div>
<div class="r" style="left:325px;top:585px;width:101px;height:17px;background:#c6c6c6"></div>
<div class="r" style="left:324px;top:604px;width:103px;height:19px;background:#dadada"></div>
<div class="r" style="left:325px;top:605px;width:101px;height:17px;background:#c6c6c6"></div>
<div class="r" style="left:428px;top:222px;width:90px;height:41px;background:#52a535"></div>
<div class="r" style="left:428px;top:222px;width:90px;height:41px;border:1px solid #fff;border-bottom:0;box-sizing:border-box"></div>
<div class="r" style="left:428px;top:264px;width:90px;height:359px;background:#fff"></div>
<div class="r" style="left:428px;top:264px;width:89px;height:19px;background:#dadada"></div>
<div class="r" style="left:429px;top:265px;width:87px;height:17px;background:#c6c6c6"></div>
<div class="r" style="left:428px;top:284px;width:89px;height:19px;background:#dadada"></div>
<div class="r" style="left:429px;top:285px;width:87px;height:17px;background:#c6c6c6"></div>
<div class="r" style="left:428px;top:304px;width:89px;height:19px;background:#dadada"></div>
<div class="r" style="left:429px;top:305px;width:87px;height:17px;background:#c6c6c6"></div>
<div class="r" style="left:428px;top:324px;width:89px;height:19px;background:#dadada"></div>
<div class="r" style="left:429px;top:325px;width:87px;height:17px;background:#c6c6c6"></div>
<div class="r" style="left:428px;top:344px;width:89px;height:19px;background:#dadada"></div>
<div class="r" style="left:429px;top:345px;width:87px;height:17px;background:#c6c6c6"></div>
<div class="r" style="left:428px;top:364px;width:89px;height:19px;background:#dadada"></div>
<div class="r" style="left:429px;top:365px;width:87px;height:17px;background:#c6c6c6"></div>
<div class="r" style="left:428px;top:384px;width:89px;height:19px;background:#dadada"></div>
<div class="r" style="left:429px;top:385px;width:87px;height:17px;background:#c6c6c6"></div>
<div class="r" style="left:428px;top:404px;width:89px;height:19px;background:#dadada"></div>
<div class="r" style="left:429px;top:405px;width:87px;height:17px;background:#c6c6c6"></div>
<div class="r" style="left:428px;top:424px;width:89px;height:19px;background:#dadada"></div>
<div class="r" style="left:429px;top:425px;width:87px;height:17px;background:#c6c6c6"></div>
<div class="r" style="left:428px;top:444px;width:89px;height:19px;background:#dadada"></div>
<div class="r" style="left:429px;top:445px;width:87px;height:17px;background:#c6c6c6"></div>
<div class="r" style="left:428px;top:464px;width:89px;height:19px;background:#dadada"></div>
<div class="r" style="left:429px;top:465px;width:87px;height:17px;background:#c6c6c6"></div>
<div class="r" style="left:428px;top:484px;width:89px;height:19px;background:#dadada"></div>
<div class="r" style="left:429px;top:485px;width:87px;height:17px;background:#c6c6c6"></div>
<div class="r" style="left:428px;top:504px;width:89px;height:19px;background:#dadada"></div>
<div class="r" style="left:429px;top:505px;width:87px;height:17px;background:#c6c6c6"></div>
<div class="r" style="left:428px;top:524px;width:89px;height:19px;background:#dadada"></div>
<div class="r" style="left:429px;top:525px;width:87px;height:17px;background:#c6c6c6"></div>
<div class="r" style="left:428px;top:544px;width:89px;height:19px;background:#dadada"></div>
<div class="r" style="left:429px;top:545px;width:87px;height:17px;background:#c6c6c6"></div>
<div class="r" style="left:428px;top:564px;width:89px;height:19px;background:#dadada"></div>
<div class="r" style="left:429px;top:565px;width:87px;height:17px;background:#c6c6c6"></div>
<div class="r" style="left:428px;top:584px;width:89px;height:19px;background:#dadada"></div>
<div class="r" style="left:429px;top:585px;width:87px;height:17px;background:#c6c6c6"></div>
<div class="r" style="left:428px;top:604px;width:89px;height:19px;background:#dadada"></div>
<div class="r" style="left:429px;top:605px;width:87px;height:17px;background:#c6c6c6"></div>
<div class="r" style="left:518px;top:222px;width:75px;height:41px;background:#6cd046"></div>
<div class="r" style="left:119px;top:222px;width:1px;height:402px;background:#000"></div>
<div class="r" style="left:217px;top:222px;width:1px;height:402px;background:#000"></div>
<div class="r" style="left:323px;top:222px;width:1px;height:402px;background:#000"></div>
<div class="r" style="left:427px;top:222px;width:1px;height:402px;background:#000"></div>
<div class="r" style="left:517px;top:222px;width:1px;height:402px;background:#000"></div>
<div class="r" style="left:592px;top:222px;width:1px;height:402px;background:#000"></div>
<div class="r" style="left:25px;top:222px;width:1px;height:402px;background:#000"></div>
<div class="r" style="left:25px;top:263px;width:568px;height:1px;background:#000"></div>
<div class="r" style="left:25px;top:283px;width:568px;height:1px;background:#000"></div>
<div class="r" style="left:25px;top:303px;width:568px;height:1px;background:#000"></div>
<div class="r" style="left:25px;top:323px;width:568px;height:1px;background:#000"></div>
<div class="r" style="left:25px;top:343px;width:568px;height:1px;background:#000"></div>
<div class="r" style="left:25px;top:363px;width:568px;height:1px;background:#000"></div>
<div class="r" style="left:25px;top:383px;width:568px;height:1px;background:#000"></div>
<div class="r" style="left:25px;top:403px;width:568px;height:1px;background:#000"></div>
<div class="r" style="left:25px;top:423px;width:568px;height:1px;background:#000"></div>
<div class="r" style="left:25px;top:443px;width:568px;height:1px;background:#000"></div>
<div class="r" style="left:25px;top:463px;width:568px;height:1px;background:#000"></div>
<div class="r" style="left:25px;top:483px;width:568px;height:1px;background:#000"></div>
<div class="r" style="left:25px;top:503px;width:568px;height:1px;background:#000"></div>
<div class="r" style="left:25px;top:523px;width:568px;height:1px;background:#000"></div>
<div class="r" style="left:25px;top:543px;width:568px;height:1px;background:#000"></div>
<div class="r" style="left:25px;top:563px;width:568px;height:1px;background:#000"></div>
<div class="r" style="left:25px;top:583px;width:568px;height:1px;background:#000"></div>
<div class="r" style="left:25px;top:603px;width:568px;height:1px;background:#000"></div>
<div class="r" style="left:25px;top:623px;width:568px;height:1px;background:#000"></div>
<div class="t" style="left:28.60px;top:226.70px;font-size:13.7px;color:#111;font-weight:bold;">Количество</div>
<div class="t" style="left:28.60px;top:247.60px;font-size:13.7px;color:#111;font-weight:bold;">ед. товара</div>
<div class="t" style="left:122.60px;top:226.70px;font-size:13.7px;color:#111;font-weight:bold;">Постоянные</div>
<div class="t" style="left:122.60px;top:247.60px;font-size:13.7px;color:#111;font-weight:bold;">затраты</div>
<div class="t" style="left:220.60px;top:226.70px;font-size:13.7px;color:#111;font-weight:bold;">Переменные</div>
<div class="t" style="left:220.60px;top:247.60px;font-size:13.7px;color:#111;font-weight:bold;">затраты</div>
<div class="t" style="left:326.60px;top:226.70px;font-size:13.7px;color:#111;font-weight:bold;">Итоговая</div>
<div class="t" style="left:326.60px;top:247.60px;font-size:13.7px;color:#111;font-weight:bold;">сумма затрат</div>
<div class="t" style="left:430.60px;top:226.70px;font-size:13.7px;color:#111;font-weight:bold;">Доход</div>
<div class="t" style="left:520.60px;top:226.70px;font-size:13.7px;color:#111;font-weight:bold;">Прибыль</div>
<div class="t" style="left:110.16px;top:268.58px;font-size:12.3px;color:#111;">1</div>
<div class="t" style="left:177.38px;top:268.58px;font-size:12.3px;color:#111;">33 000</div>
<div class="t" style="left:290.22px;top:268.58px;font-size:12.3px;color:#111;">4 100</div>
<div class="t" style="left:387.38px;top:268.58px;font-size:12.3px;color:#111;">37 100</div>
<div class="t" style="left:484.22px;top:268.58px;font-size:12.3px;color:#111;">6 850</div>
<div class="t" style="left:548.29px;top:268.58px;font-size:12.3px;color:#111;">-30 250</div>
<div class="t" style="left:110.16px;top:288.58px;font-size:12.3px;color:#111;">2</div>
<div class="t" style="left:177.38px;top:288.58px;font-size:12.3px;color:#111;">33 000</div>
<div class="t" style="left:290.22px;top:288.58px;font-size:12.3px;color:#111;">8 200</div>
<div class="t" style="left:387.38px;top:288.58px;font-size:12.3px;color:#111;">41 200</div>
<div class="t" style="left:477.38px;top:288.58px;font-size:12.3px;color:#111;">13 700</div>
<div class="t" style="left:548.29px;top:288.58px;font-size:12.3px;color:#111;">-27 500</div>
<div class="t" style="left:110.16px;top:308.58px;font-size:12.3px;color:#111;">3</div>
<div class="t" style="left:177.38px;top:308.58px;font-size:12.3px;color:#111;">33 000</div>
<div class="t" style="left:283.38px;top:308.58px;font-size:12.3px;color:#111;">12 300</div>
<div class="t" style="left:387.38px;top:308.58px;font-size:12.3px;color:#111;">45 300</div>
<div class="t" style="left:477.38px;top:308.58px;font-size:12.3px;color:#111;">20 550</div>
<div class="t" style="left:548.29px;top:308.58px;font-size:12.3px;color:#111;">-24 750</div>
<div class="t" style="left:110.16px;top:328.58px;font-size:12.3px;color:#111;">4</div>
<div class="t" style="left:177.38px;top:328.58px;font-size:12.3px;color:#111;">33 000</div>
<div class="t" style="left:283.38px;top:328.58px;font-size:12.3px;color:#111;">16 400</div>
<div class="t" style="left:387.38px;top:328.58px;font-size:12.3px;color:#111;">49 400</div>
<div class="t" style="left:477.38px;top:328.58px;font-size:12.3px;color:#111;">27 400</div>
<div class="t" style="left:548.29px;top:328.58px;font-size:12.3px;color:#111;">-22 000</div>
<div class="t" style="left:110.16px;top:348.58px;font-size:12.3px;color:#111;">5</div>
<div class="t" style="left:177.38px;top:348.58px;font-size:12.3px;color:#111;">33 000</div>
<div class="t" style="left:283.38px;top:348.58px;font-size:12.3px;color:#111;">20 500</div>
<div class="t" style="left:387.38px;top:348.58px;font-size:12.3px;color:#111;">53 500</div>
<div class="t" style="left:477.38px;top:348.58px;font-size:12.3px;color:#111;">34 250</div>
<div class="t" style="left:548.29px;top:348.58px;font-size:12.3px;color:#111;">-19 250</div>
<div class="t" style="left:110.16px;top:368.58px;font-size:12.3px;color:#111;">6</div>
<div class="t" style="left:177.38px;top:368.58px;font-size:12.3px;color:#111;">33 000</div>
<div class="t" style="left:283.38px;top:368.58px;font-size:12.3px;color:#111;">24 600</div>
<div class="t" style="left:387.38px;top:368.58px;font-size:12.3px;color:#111;">57 600</div>
<div class="t" style="left:477.38px;top:368.58px;font-size:12.3px;color:#111;">41 100</div>
<div class="t" style="left:548.29px;top:368.58px;font-size:12.3px;color:#111;">-16 500</div>
<div class="t" style="left:110.16px;top:388.58px;font-size:12.3px;color:#111;">7</div>
<div class="t" style="left:177.38px;top:388.58px;font-size:12.3px;color:#111;">33 000</div>
<div class="t" style="left:283.38px;top:388.58px;font-size:12.3px;color:#111;">28 700</div>
<div class="t" style="left:387.38px;top:388.58px;font-size:12.3px;color:#111;">61 700</div>
<div class="t" style="left:477.38px;top:388.58px;font-size:12.3px;color:#111;">47 950</div>
<div class="t" style="left:548.29px;top:388.58px;font-size:12.3px;color:#111;">-13 750</div>
<div class="t" style="left:110.16px;top:408.58px;font-size:12.3px;color:#111;">8</div>
<div class="t" style="left:177.38px;top:408.58px;font-size:12.3px;color:#111;">33 000</div>
<div class="t" style="left:283.38px;top:408.58px;font-size:12.3px;color:#111;">32 800</div>
<div class="t" style="left:387.38px;top:408.58px;font-size:12.3px;color:#111;">65 800</div>
<div class="t" style="left:477.38px;top:408.58px;font-size:12.3px;color:#111;">54 800</div>
<div class="t" style="left:549.20px;top:408.58px;font-size:12.3px;color:#111;">-11 000</div>
<div class="t" style="left:110.16px;top:428.58px;font-size:12.3px;color:#111;">9</div>
<div class="t" style="left:177.38px;top:428.58px;font-size:12.3px;color:#111;">33 000</div>
<div class="t" style="left:283.38px;top:428.58px;font-size:12.3px;color:#111;">36 900</div>
<div class="t" style="left:387.38px;top:428.58px;font-size:12.3px;color:#111;">69 900</div>
<div class="t" style="left:477.38px;top:428.58px;font-size:12.3px;color:#111;">61 650</div>
<div class="t" style="left:555.13px;top:428.58px;font-size:12.3px;color:#111;">-8 250</div>
<div class="t" style="left:103.32px;top:448.58px;font-size:12.3px;color:#111;">10</div>
<div class="t" style="left:177.38px;top:448.58px;font-size:12.3px;color:#111;">33 000</div>
<div class="t" style="left:283.38px;top:448.58px;font-size:12.3px;color:#111;">41 000</div>
<div class="t" style="left:387.38px;top:448.58px;font-size:12.3px;color:#111;">74 000</div>
<div class="t" style="left:477.38px;top:448.58px;font-size:12.3px;color:#111;">68 500</div>
<div class="t" style="left:555.13px;top:448.58px;font-size:12.3px;color:#111;">-5 500</div>
<div class="t" style="left:104.23px;top:468.58px;font-size:12.3px;color:#111;">11</div>
<div class="t" style="left:177.38px;top:468.58px;font-size:12.3px;color:#111;">33 000</div>
<div class="t" style="left:283.38px;top:468.58px;font-size:12.3px;color:#111;">45 100</div>
<div class="t" style="left:387.38px;top:468.58px;font-size:12.3px;color:#111;">78 100</div>
<div class="t" style="left:477.38px;top:468.58px;font-size:12.3px;color:#111;">75 350</div>
<div class="t" style="left:555.13px;top:468.58px;font-size:12.3px;color:#111;">-2 750</div>
<div class="t" style="left:103.32px;top:488.58px;font-size:12.3px;color:#111;">12</div>
<div class="t" style="left:177.38px;top:488.58px;font-size:12.3px;color:#111;">33 000</div>
<div class="t" style="left:283.38px;top:488.58px;font-size:12.3px;color:#111;">49 200</div>
<div class="t" style="left:387.38px;top:488.58px;font-size:12.3px;color:#111;">82 200</div>
<div class="t" style="left:477.38px;top:488.58px;font-size:12.3px;color:#111;">82 200</div>
<div class="t" style="left:583.16px;top:488.58px;font-size:12.3px;color:#111;">0</div>
<div class="t" style="left:103.32px;top:508.58px;font-size:12.3px;color:#111;">13</div>
<div class="t" style="left:177.38px;top:508.58px;font-size:12.3px;color:#111;">33 000</div>
<div class="t" style="left:283.38px;top:508.58px;font-size:12.3px;color:#111;">53 300</div>
<div class="t" style="left:387.38px;top:508.58px;font-size:12.3px;color:#111;">86 300</div>
<div class="t" style="left:477.38px;top:508.58px;font-size:12.3px;color:#111;">89 050</div>
<div class="t" style="left:559.22px;top:508.58px;font-size:12.3px;color:#111;">2 750</div>
<div class="t" style="left:103.32px;top:528.58px;font-size:12.3px;color:#111;">14</div>
<div class="t" style="left:177.38px;top:528.58px;font-size:12.3px;color:#111;">33 000</div>
<div class="t" style="left:283.38px;top:528.58px;font-size:12.3px;color:#111;">57 400</div>
<div class="t" style="left:387.38px;top:528.58px;font-size:12.3px;color:#111;">90 400</div>
<div class="t" style="left:477.38px;top:528.58px;font-size:12.3px;color:#111;">95 900</div>
<div class="t" style="left:559.22px;top:528.58px;font-size:12.3px;color:#111;">5 500</div>
<div class="t" style="left:103.32px;top:548.58px;font-size:12.3px;color:#111;">15</div>
<div class="t" style="left:177.38px;top:548.58px;font-size:12.3px;color:#111;">33 000</div>
<div class="t" style="left:283.38px;top:548.58px;font-size:12.3px;color:#111;">61 500</div>
<div class="t" style="left:387.38px;top:548.58px;font-size:12.3px;color:#111;">94 500</div>
<div class="t" style="left:470.54px;top:548.58px;font-size:12.3px;color:#111;">102 750</div>
<div class="t" style="left:559.22px;top:548.58px;font-size:12.3px;color:#111;">8 250</div>
<div class="t" style="left:103.32px;top:568.58px;font-size:12.3px;color:#111;">16</div>
<div class="t" style="left:177.38px;top:568.58px;font-size:12.3px;color:#111;">33 000</div>
<div class="t" style="left:283.38px;top:568.58px;font-size:12.3px;color:#111;">65 600</div>
<div class="t" style="left:387.38px;top:568.58px;font-size:12.3px;color:#111;">98 600</div>
<div class="t" style="left:470.54px;top:568.58px;font-size:12.3px;color:#111;">109 600</div>
<div class="t" style="left:553.30px;top:568.58px;font-size:12.3px;color:#111;">11 000</div>
<div class="t" style="left:103.32px;top:588.58px;font-size:12.3px;color:#111;">17</div>
<div class="t" style="left:177.38px;top:588.58px;font-size:12.3px;color:#111;">33 000</div>
<div class="t" style="left:283.38px;top:588.58px;font-size:12.3px;color:#111;">69 700</div>
<div class="t" style="left:380.54px;top:588.58px;font-size:12.3px;color:#111;">102 700</div>
<div class="t" style="left:471.46px;top:588.58px;font-size:12.3px;color:#111;">116 450</div>
<div class="t" style="left:552.38px;top:588.58px;font-size:12.3px;color:#111;">13 750</div>
<div class="t" style="left:103.32px;top:608.58px;font-size:12.3px;color:#111;">18</div>
<div class="t" style="left:177.38px;top:608.58px;font-size:12.3px;color:#111;">33 000</div>
<div class="t" style="left:283.38px;top:608.58px;font-size:12.3px;color:#111;">73 800</div>
<div class="t" style="left:380.54px;top:608.58px;font-size:12.3px;color:#111;">106 800</div>
<div class="t" style="left:470.54px;top:608.58px;font-size:12.3px;color:#111;">123 300</div>
<div class="t" style="left:552.38px;top:608.58px;font-size:12.3px;color:#111;">16 500</div>
<div class="r" style="left:24px;top:220px;width:2px;height:404px;background:#007541"></div>
<div class="r" style="left:24px;top:220px;width:96px;height:2px;background:#007541"></div>
<div class="r" style="left:1px;top:665px;width:1103px;height:28px;background:#e6e6e6"></div>
<div class="r" style="left:1px;top:665px;width:1083px;height:1px;background:#c6c6c6"></div>
<svg class="r" style="left:27px;top:675px;" width="5" height="8" viewBox="0 0 5 8"><path d="M4.5 0v8L0 4z" fill="#bcbcbc"/></svg>
<svg class="r" style="left:56px;top:675px;" width="5" height="8" viewBox="0 0 5 8"><path d="M0 0v8l4.5-4z" fill="#bcbcbc"/></svg>
<div class="r" style="left:100px;top:669px;width:1px;height:20px;background:#c0c0c0"></div>
<div class="t" style="left:115.20px;top:671.79px;font-size:13px;color:#333;letter-spacing:-0.015px;">microexcel.ru</div>
<div class="r" style="left:207px;top:665px;width:60px;height:25px;background:#fff"></div>
<div class="r" style="left:207px;top:687px;width:60px;height:2px;background:#007541"></div>
<div class="r" style="left:207px;top:665px;width:1px;height:25px;background:#c6c6c6"></div>
<div class="r" style="left:266px;top:665px;width:1px;height:25px;background:#c6c6c6"></div>
<div class="t" style="left:219.00px;top:671.79px;font-size:13px;color:#007541;font-weight:bold;letter-spacing:-0.548px;">Лист1</div>
<svg class="r" style="left:300px;top:672px;" width="16" height="16" viewBox="0 0 16 16"><circle cx="8" cy="8" r="7.3" fill="none" stroke="#777" stroke-width="1.2"/><path d="M8 4v8M4 8h8" stroke="#777" stroke-width="1.6"/></svg>
<svg class="r" style="left:662px;top:674px;" width="3" height="10" viewBox="0 0 3 10"><g fill="#9a9a9a"><rect x="0.5" y="0" width="1.5" height="1.5"/><rect x="0.5" y="4" width="1.5" height="1.5"/><rect x="0.5" y="8" width="1.5" height="1.5"/></g></svg>
<div class="r" style="left:680px;top:672px;width:15px;height:15px;background:#fff;border:1px solid #ababab;box-sizing:border-box"></div>
<svg class="r" style="left:685px;top:676px;" width="5" height="7" viewBox="0 0 5 7"><path d="M4.5 0v7L0 3.5z" fill="#555"/></svg>
<div class="r" style="left:694px;top:672px;width:346px;height:15px;background:#fff;border:1px solid #ababab;box-sizing:border-box"></div>
<div class="r" style="left:1040px;top:672px;width:30px;height:15px;background:#dcdcdc"></div>
<div class="r" style="left:1069px;top:672px;width:15px;height:15px;background:#fff;border:1px solid #ababab;box-sizing:border-box"></div>
<svg class="r" style="left:1074px;top:676px;" width="5" height="7" viewBox="0 0 5 7"><path d="M0 0v7l4.5-3.5z" fill="#555"/></svg>
<div class="r" style="left:1084px;top:202px;width:20px;height:463px;background:#e6e6e6"></div>
<div class="r" style="left:1087px;top:204px;width:15px;height:15px;background:#fff;border:1px solid #ababab;box-sizing:border-box"></div>
<svg class="r" style="left:1091px;top:209px;" width="7" height="4" viewBox="0 0 7 4"><path d="M0 4h7L3.5 0z" fill="#555"/></svg>
<div class="r" style="left:1087px;top:218px;width:15px;height:412px;background:#fff;border:1px solid #ababab;box-sizing:border-box"></div>
<div class="r" style="left:1087px;top:630px;width:15px;height:22px;background:#dcdcdc"></div>
<div class="r" style="left:1087px;top:651px;width:15px;height:15px;background:#fff;border:1px solid #ababab;box-sizing:border-box"></div>
<svg class="r" style="left:1091px;top:656px;" width="7" height="4" viewBox="0 0 7 4"><path d="M0 0h7L3.5 4z" fill="#555"/></svg>
<div class="r" style="left:1px;top:693px;width:1103px;height:19px;background:#f3f3f3"></div>
<div class="r" style="left:1px;top:693px;width:1103px;height:1px;background:#cfcfcf"></div>
<div class="t" style="left:8.70px;top:697.23px;font-size:11.3px;color:#444;letter-spacing:0.102px;">Готово</div>
<svg class="r" style="left:64px;top:697px;" width="13" height="13" viewBox="0 0 13 13"><circle cx="3" cy="3" r="2.8" fill="#666"/><rect x="6" y="1.5" width="6.5" height="2" fill="#666"/><rect x="1.5" y="5.5" width="11" height="7" fill="none" stroke="#666" stroke-width="1"/><g fill="#666"><rect x="3" y="7" width="1.5" height="1"/><rect x="6" y="7" width="1.5" height="1"/><rect x="9" y="7" width="1.5" height="1"/><rect x="3" y="9.5" width="1.5" height="1"/><rect x="6" y="9.5" width="1.5" height="1"/><rect x="9" y="9.5" width="1.5" height="1"/></g></svg>
<div class="t" style="left:479.00px;top:697.23px;font-size:11.3px;color:#333;letter-spacing:-0.242px;">Среднее: 45678,16667</div>
<div class="t" style="left:609.20px;top:697.23px;font-size:11.3px;color:#333;letter-spacing:0.034px;">Количество: 57</div>
<div class="t" style="left:705.50px;top:697.23px;font-size:11.3px;color:#333;letter-spacing:-0.376px;">Сумма: 2466621</div>
<div class="r" style="left:805px;top:694px;width:38px;height:17px;background:#d2d2d2"></div>
<svg class="r" style="left:817px;top:697px;" width="13" height="13" viewBox="0 0 13 13"><path d="M0.5 0.5h12v12H0.5zM4.5 0.5v12M8.5 0.5v12M0.5 4.5h12M0.5 8.5h12" fill="none" stroke="#666" stroke-width="1"/></svg>
<svg class="r" style="left:855px;top:697px;" width="15" height="13" viewBox="0 0 15 13"><rect x="0.5" y="0.5" width="14" height="12" fill="none" stroke="#666"/><rect x="3.5" y="2.5" width="8" height="8" fill="none" stroke="#666"/><path d="M5 5h5M5 7h5" stroke="#666"/></svg>
<svg class="r" style="left:893px;top:697px;" width="15" height="13" viewBox="0 0 15 13"><path d="M0.5 0.5h14v12H0.5z M4.5 0.5v5h6v-5" fill="none" stroke="#666"/></svg>
<div class="r" style="left:924px;top:703px;width:6px;height:2px;background:#555"></div>
<div class="r" style="left:934px;top:704px;width:100px;height:1px;background:#9a9a9a"></div>
<div class="r" style="left:982px;top:698px;width:5px;height:11px;background:#666"></div>
<svg class="r" style="left:1037px;top:700px;" width="9" height="9" viewBox="0 0 9 9"><path d="M4.5 0v9M0 4.5h9" stroke="#555" stroke-width="1.8"/></svg>
<div class="t" style="left:1056.70px;top:697.23px;font-size:11.3px;color:#333;letter-spacing:-0.648px;">100 %</div>
<div class="r" style="left:0px;top:63px;width:1px;height:650px;background:#007541"></div>
<div class="r" style="left:1104px;top:63px;width:1px;height:650px;background:#007541"></div>
<div class="r" style="left:0px;top:712px;width:1105px;height:1px;background:#007541"></div>
<div class="r" style="left:380px;top:135px;width:231px;height:242px;box-shadow:0 1px 4px rgba(0,0,0,0.28)"></div>
<div class="r" style="left:380px;top:135px;width:231px;height:242px;background:#fff;border:1px solid #c6c6c6;box-sizing:border-box"></div>
<div class="r" style="left:381px;top:137px;width:229px;height:22px;background:#e8e8e8"></div>
<div class="t" style="left:392.00px;top:141.84px;font-size:12px;color:#5a5a5a;font-weight:bold;letter-spacing:-0.142px;-webkit-text-stroke:0;">Точечная</div>
<svg class="r" style="left:390px;top:168px;" width="42" height="38" viewBox="0 0 42 38"><path d="M0.5 0V36.5H40" fill="none" stroke="#7a7a7a" stroke-width="1.2"/><circle cx="6" cy="4.5" r="2.2" fill="#fff" stroke="#6e6e6e" stroke-width="0.9"/><circle cx="32" cy="6" r="2.2" fill="#fff" stroke="#6e6e6e" stroke-width="0.9"/><circle cx="14" cy="15.5" r="2.6" fill="#6e6e6e"/><circle cx="28" cy="20.5" r="2.6" fill="#6e6e6e"/><circle cx="14" cy="24" r="2.2" fill="#fff" stroke="#6e6e6e" stroke-width="0.9"/><circle cx="21.5" cy="27" r="2.2" fill="#fff" stroke="#6e6e6e" stroke-width="0.9"/><circle cx="5" cy="30.5" r="2.6" fill="#6e6e6e"/><circle cx="32" cy="31.5" r="2.6" fill="#6e6e6e"/></svg>
<svg class="r" style="left:446px;top:168px;" width="42" height="38" viewBox="0 0 42 38"><path d="M0.5 0V36.5H40" fill="none" stroke="#7a7a7a" stroke-width="1.2"/><path d="M7 5.5C10 14 13 22 17 26.5C20 29 23 30.5 25 30.5S30 28 31.5 30.5C35 20 35.5 12 35.5 7" fill="none" stroke="#8a8a8a" stroke-width="0.9"/><path d="M5.5 30.5C8 20 12 13 16 11.5C21 9.5 26 12 30 18C32 22 32 26 31.5 30.5" fill="none" stroke="#8a8a8a" stroke-width="0.9"/><circle cx="7" cy="5.5" r="2.2" fill="#fff" stroke="#6e6e6e" stroke-width="0.9"/><circle cx="35.5" cy="7" r="2.2" fill="#fff" stroke="#6e6e6e" stroke-width="0.9"/><circle cx="16" cy="11.5" r="2.6" fill="#6e6e6e"/><circle cx="30" cy="18" r="2.6" fill="#6e6e6e"/><circle cx="17" cy="26.5" r="2.2" fill="#fff" stroke="#6e6e6e" stroke-width="0.9"/><circle cx="25" cy="30.5" r="2.2" fill="#fff" stroke="#6e6e6e" stroke-width="0.9"/><circle cx="5.5" cy="30.5" r="2.6" fill="#6e6e6e"/><circle cx="31.5" cy="30.5" r="2.6" fill="#6e6e6e"/></svg>
<svg class="r" style="left:502px;top:168px;" width="42" height="38" viewBox="0 0 42 38"><path d="M0.5 0V36.5H40" fill="none" stroke="#7a7a7a" stroke-width="1.2"/><path d="M6.5 8.5C10 20 16 28 24 28.5C31 29 32 22 31.5 4" fill="none" stroke="#6e6e6e" stroke-width="1"/><path d="M11 32C13 22 19 15 26 14.5C33 14 35 24 35 32.5" fill="none" stroke="#9a9a9a" stroke-width="1"/></svg>
<svg class="r" style="left:558px;top:168px;" width="42" height="38" viewBox="0 0 42 38"><path d="M0.5 0V36.5H40" fill="none" stroke="#7a7a7a" stroke-width="1.2"/><path d="M7.2 8.3L15.4 26.5L33.6 9.4M8.4 30.4L16.4 12.1L33.6 29.6M23.4 30.4L30.4 18.4L33.6 29.6" fill="none" stroke="#7a7a7a" stroke-width="0.9"/><circle cx="7.2" cy="8.3" r="2.2" fill="#fff" stroke="#6e6e6e" stroke-width="0.9"/><circle cx="33.6" cy="9.4" r="2.2" fill="#fff" stroke="#6e6e6e" stroke-width="0.9"/><circle cx="16.4" cy="12.1" r="2.6" fill="#6e6e6e"/><circle cx="30.4" cy="18.4" r="2.6" fill="#6e6e6e"/><circle cx="15.4" cy="26.5" r="2.2" fill="#fff" stroke="#6e6e6e" stroke-width="0.9"/><circle cx="23.4" cy="30.4" r="2.2" fill="#fff" stroke="#6e6e6e" stroke-width="0.9"/><circle cx="8.4" cy="30.4" r="2.6" fill="#6e6e6e"/><circle cx="33.6" cy="29.6" r="2.6" fill="#6e6e6e"/></svg>
<div class="r" style="left:439px;top:160px;width:52px;height:51px;border:3.5px solid #ee0a0a;border-radius:9px;box-sizing:border-box"></div>
<svg class="r" style="left:390px;top:224px;" width="42" height="38" viewBox="0 0 42 38"><path d="M0.5 0V36.5H40" fill="none" stroke="#7a7a7a" stroke-width="1.2"/><path d="M4 5L13 23.5L17 14.5L24 22L29 6L22.5 27.5L19 17.5L7.5 30.5" fill="none" stroke="#8a8a8a" stroke-width="0.9"/><path d="M24 22L32 31.5L29 21" fill="none" stroke="#8a8a8a" stroke-width="0.9"/></svg>
<div class="r" style="left:381px;top:271px;width:229px;height:22px;background:#e8e8e8"></div>
<div class="t" style="left:391.40px;top:275.84px;font-size:12px;color:#5a5a5a;font-weight:bold;letter-spacing:-0.230px;-webkit-text-stroke:0;">Пузырьковая</div>
<svg class="r" style="left:390px;top:302px;" width="42" height="38" viewBox="0 0 42 38"><path d="M0.5 0V36.5H40" fill="none" stroke="#7a7a7a" stroke-width="1.2"/><circle cx="14" cy="10" r="6.3" fill="#6a6266"/><circle cx="25.5" cy="17" r="4.2" fill="#6a6266"/><circle cx="11" cy="23.5" r="6" fill="#fff" stroke="#555" stroke-width="0.9"/><circle cx="25" cy="28" r="4.3" fill="#fff" stroke="#555" stroke-width="0.9"/></svg>
<svg class="r" style="left:446px;top:302px;" width="42" height="38" viewBox="0 0 42 38"><defs><radialGradient id="gb" cx="0.35" cy="0.3" r="0.75"><stop offset="0" stop-color="#f2f2f2"/><stop offset="0.6" stop-color="#a8a8a8"/><stop offset="1" stop-color="#7a7a7a"/></radialGradient></defs><path d="M0.5 0V36.5H40" fill="none" stroke="#7a7a7a" stroke-width="1.2"/><circle cx="17" cy="10" r="6.3" fill="url(#gb)"/><circle cx="28" cy="17" r="4.3" fill="url(#gb)"/><circle cx="13" cy="23" r="6.1" fill="url(#gb)"/><circle cx="26.5" cy="28" r="5" fill="url(#gb)"/></svg>
<div class="r" style="left:383px;top:349px;width:225px;height:1px;background:#dedede"></div>
<svg class="r" style="left:386px;top:354px;" width="17" height="17" viewBox="0 0 17 17"><path d="M0.5 0V16H16.5" fill="none" stroke="#7a7a7a" stroke-width="1"/><rect x="5" y="10" width="1" height="1" fill="#808080"/><rect x="10" y="3" width="1" height="1" fill="#808080"/><rect x="7" y="10" width="1" height="1" fill="#808080"/><rect x="9" y="11" width="1" height="1" fill="#808080"/><rect x="11" y="2" width="1" height="1" fill="#808080"/><rect x="11" y="1" width="1" height="1" fill="#808080"/><rect x="15" y="8" width="1" height="1" fill="#808080"/><rect x="6" y="9" width="1" height="1" fill="#808080"/><rect x="5" y="4" width="1" height="1" fill="#808080"/><rect x="13" y="8" width="1" height="1" fill="#808080"/><rect x="10" y="14" width="1" height="1" fill="#808080"/><rect x="10" y="8" width="1" height="1" fill="#808080"/><rect x="8" y="11" width="1" height="1" fill="#808080"/><rect x="15" y="3" width="1" height="1" fill="#808080"/><rect x="5" y="11" width="1" height="1" fill="#808080"/><rect x="4" y="14" width="1" height="1" fill="#808080"/><rect x="10" y="7" width="1" height="1" fill="#808080"/><rect x="13" y="1" width="1" height="1" fill="#808080"/><rect x="12" y="13" width="1" height="1" fill="#808080"/><rect x="3" y="3" width="1" height="1" fill="#808080"/><rect x="14" y="10" width="1" height="1" fill="#808080"/><rect x="2" y="5" width="1" height="1" fill="#808080"/><rect x="14" y="1" width="1" height="1" fill="#808080"/><rect x="15" y="14" width="1" height="1" fill="#808080"/><rect x="6" y="8" width="1" height="1" fill="#808080"/><rect x="11" y="12" width="1" height="1" fill="#808080"/><rect x="8" y="12" width="1" height="1" fill="#808080"/><rect x="14" y="7" width="1" height="1" fill="#808080"/><rect x="8" y="12" width="1" height="1" fill="#808080"/><rect x="14" y="10" width="1" height="1" fill="#808080"/></svg>
<div class="t" style="left:414.00px;top:356.84px;font-size:12px;color:#333;letter-spacing:0.033px;">Другие точечные диаграммы...</div>
<div class="r" style="left:434px;top:369px;width:6px;height:1px;background:#333"></div>
</body></html>
